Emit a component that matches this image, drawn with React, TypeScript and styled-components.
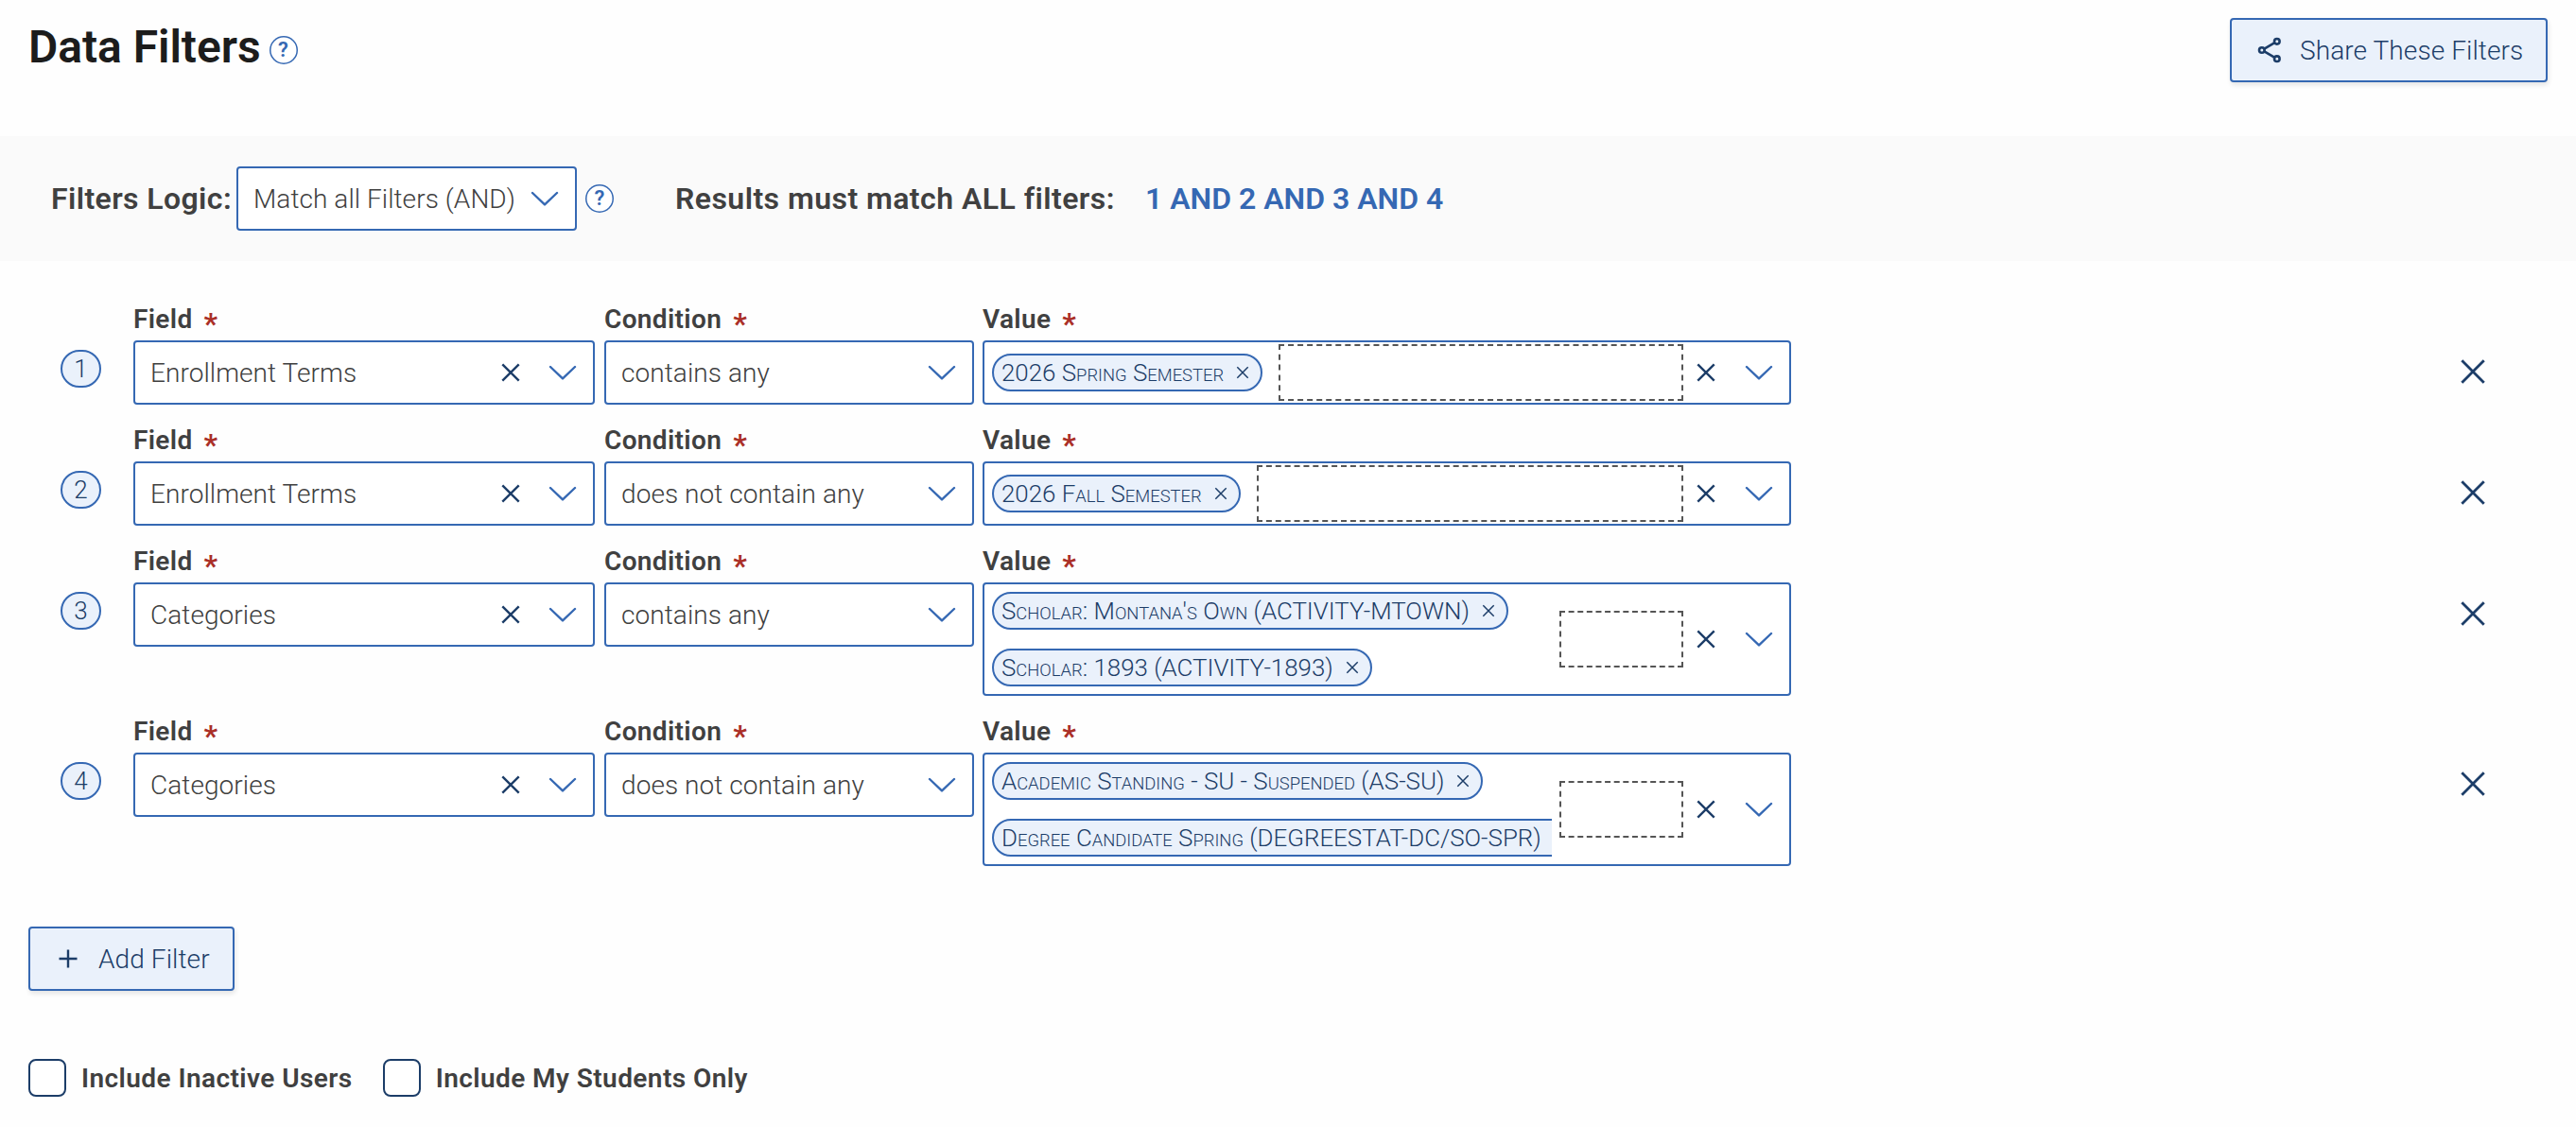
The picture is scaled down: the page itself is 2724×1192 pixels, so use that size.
import { createGlobalStyle, styled } from "styled-components";

const GlobalStyle = createGlobalStyle`
  * {
    box-sizing: border-box;
  }
  body {
    margin: 0;
    background-color: #fefefe;
    color: #404040;
    font-family: Roboto, "Liberation Sans", sans-serif;
    font-size: 28px;
    font-weight: 300;
  }
  svg {
    display: block;
    flex-shrink: 0;
  }
`;

const Header = styled.header`
  display: flex;
  justify-content: space-between;
  align-items: flex-start;
  height: 144px;
  padding: 19px 30px 0;
`;
const TitleGroup = styled.div`
  display: flex;
  align-items: center;
  gap: 9px;
  height: 60px;
  padding-top: 8px;
`;
const Title = styled.h1`
  margin: 0 0 6px;
  font-size: 48px;
  font-weight: 600;
  line-height: 56px;
  letter-spacing: -0.05px;
  color: #1c1c1c;
`;
const Help = styled.span`
  display: flex;
  align-items: center;
  justify-content: center;
  width: 30px;
  height: 30px;
  border-radius: 50%;
  background-color: #ffffff;
  box-shadow: inset 0 0 0 1.5px #3568b3;
  color: #3568b3;
  font-size: 22px;
  font-weight: 600;
  line-height: 1;
`;
const Button = styled.button<{ $width: number; $gap: number; $indent: number }>`
  display: flex;
  align-items: center;
  gap: ${(props) => props.$gap}px;
  width: ${(props) => props.$width}px;
  height: 68px;
  padding: 0 0 0 ${(props) => props.$indent}px;
  border: 2px solid #3568b3;
  border-radius: 4px;
  background-color: #eaf1fb;
  box-shadow: 1px 3px 5px rgba(0, 0, 0, 0.1);
  color: #1c3d68;
  font-family: inherit;
  font-size: 28px;
  font-weight: 300;
  letter-spacing: 0.1px;
  white-space: nowrap;
`;

const LogicBar = styled.section`
  display: flex;
  align-items: center;
  height: 132px;
  padding-left: 54px;
  background-color: #fafafa;
  font-size: 32px;
  font-weight: 600;
`;
const LogicLabel = styled.span`
  width: 196px;
  letter-spacing: 0.4px;
  white-space: nowrap;
`;
const LogicHelp = styled.div`
  margin: 0 65px 0 9px;
`;
const LogicSummary = styled.span`
  letter-spacing: 0.45px;
`;
const Expression = styled.span`
  margin-left: 32px;
  color: #3568b3;
`;

const Rows = styled.main`
  display: flex;
  flex-direction: column;
  gap: 10px;
  padding-top: 34px;
`;
const Row = styled.div`
  display: flex;
  align-items: flex-start;
  padding: 0 96px 0 64px;
`;
const Badge = styled.span`
  display: flex;
  align-items: center;
  justify-content: center;
  width: 43px;
  height: 40px;
  margin: 60px 34px 0 0;
  border: 2px solid #3568b3;
  border-radius: 20px;
  background-color: #eaf1fb;
  color: #1c3d68;
  font-size: 26px;
`;
const Column = styled.div<{ $width: number }>`
  width: ${(props) => props.$width}px;
`;
const Columns = styled.div`
  display: grid;
  grid-template-columns: 498px 400px 855px;
`;
const Label = styled.div`
  display: flex;
  height: 50px;
  padding-top: 11px;
  font-size: 28px;
  font-weight: 600;
  letter-spacing: 0.35px;
  line-height: 34px;
`;
const Required = styled.span`
  margin: 4px 0 0 12px;
  color: #aa2f27;
  font-size: 32px;
  font-weight: 700;
`;
const Select = styled.div<{ $width?: number }>`
  display: flex;
  align-items: center;
  width: ${(props) => (props.$width ? `${props.$width}px` : "100%")};
  height: 68px;
  padding: 0 17px 0 16px;
  border: 2px solid #3568b3;
  border-radius: 4px;
  background-color: #ffffff;
  font-size: 28px;
  font-weight: 300;
`;
const SelectText = styled.span`
  flex: 1;
  letter-spacing: 0.07px;
  white-space: nowrap;
`;
const Actions = styled.div<{ $gap: number }>`
  display: flex;
  align-items: center;
  gap: ${(props) => props.$gap}px;
`;
const MultiSelect = styled(Select)`
  height: auto;
  min-height: 68px;
  padding: 0 17px 0 8px;
`;
const Tags = styled.div<{ $wrap: boolean }>`
  display: flex;
  flex-direction: column;
  align-items: flex-start;
  gap: 20px;
  width: ${(props) => (props.$wrap ? "592px" : "auto")};
  margin-right: ${(props) => (props.$wrap ? 8 : 17)}px;
  padding: ${(props) => (props.$wrap ? "8px 0" : "0")};
  overflow: hidden;
`;
const Tag = styled.span`
  display: flex;
  align-items: center;
  flex-shrink: 0;
  gap: 13px;
  height: 40px;
  padding: 0 12px 0 8px;
  border: 2px solid #3568b3;
  border-radius: 20px;
  background-color: #eaf1fb;
  color: #1c3d68;
  font-size: 25.9px;
  white-space: nowrap;
`;
const SmallCaps = styled.span`
  font-size: 0.71em;
  text-transform: uppercase;
`;
const TagInput = styled.div`
  flex: 1;
  height: 60px;
  margin-right: 14px;
  border: 2px dashed #555555;
`;
const RemoveRow = styled.div`
  margin: 70px 0 0 auto;
`;

const Footer = styled.footer`
  padding: 64px 30px 0;
`;
const Options = styled.div`
  display: flex;
  gap: 32px;
  margin-top: 72px;
`;
const Option = styled.label`
  display: flex;
  align-items: center;
  gap: 16px;
  height: 40px;
  font-size: 28px;
  font-weight: 600;
  letter-spacing: 0.43px;
  line-height: 34px;
`;
const OptionText = styled.span`
  padding-top: 2px;
`;
const Checkbox = styled.span`
  width: 40px;
  height: 40px;
  border: 2px solid #1c3d68;
  border-radius: 8px;
  background-color: #ffffff;
`;

const Cross = ({ size, stroke = 2.4 }: { size: number; stroke?: number }) => (
  <svg width={size} height={size} viewBox={`0 0 ${size} ${size}`}>
    <path
      d={`M1.3 1.3L${size - 1.3} ${size - 1.3}M${size - 1.3} 1.3L1.3 ${size - 1.3}`}
      stroke="#1c3d68"
      strokeWidth={stroke}
    />
  </svg>
);
const Chevron = () => (
  <svg width="30" height="16" viewBox="0 0 30 16" fill="none">
    <path
      d="M2 2L15 14.4L28 2"
      stroke="#3568b3"
      strokeWidth="2.4"
      strokeLinecap="round"
      strokeLinejoin="round"
    />
  </svg>
);
const ShareIcon = () => (
  <svg width="26" height="28" viewBox="0 0 26 28" fill="none">
    <g stroke="#1c3d68" strokeWidth="2.6">
      <path d="M7.4 12.6L18 6.4M7.4 15.4L18 21.6" />
      <circle cx="4.8" cy="14" r="2.8" />
      <circle cx="20.8" cy="4.8" r="2.8" />
      <circle cx="20.8" cy="23.2" r="2.8" />
    </g>
  </svg>
);
const PlusIcon = () => (
  <svg width="20" height="20" viewBox="0 0 20 20">
    <path d="M10 0.5V19.5M0.5 10H19.5" stroke="#1c3d68" strokeWidth="2.4" />
  </svg>
);

interface IFilter {
  field: string;
  condition: string;
  values: string[];
}

const filters: IFilter[] = [
  {
    field: "Enrollment Terms",
    condition: "contains any",
    values: ["2026 Spring Semester"],
  },
  {
    field: "Enrollment Terms",
    condition: "does not contain any",
    values: ["2026 Fall Semester"],
  },
  {
    field: "Categories",
    condition: "contains any",
    values: ["Scholar: Montana's Own (ACTIVITY-MTOWN)", "Scholar: 1893 (ACTIVITY-1893)"],
  },
  {
    field: "Categories",
    condition: "does not contain any",
    values: [
      "Academic Standing - SU - Suspended (AS-SU)",
      "Degree Candidate Spring (DEGREESTAT-DC/SO-SPR)",
    ],
  },
];

const RequiredLabel = ({ text }: { text: string }) => (
  <Label>
    {text}
    <Required>*</Required>
  </Label>
);

// lowercase runs are set as scaled capitals
const TagText = ({ text }: { text: string }) => (
  <span>
    {text
      .split(/([a-z]+)/)
      .map((part, i) => (i % 2 ? <SmallCaps key={i}>{part}</SmallCaps> : part))}
  </span>
);

const FilterRow = ({ filter, index }: { filter: IFilter; index: number }) => (
  <Row>
    <Badge>{index + 1}</Badge>
    <Columns>
      <Column $width={488}>
        <RequiredLabel text="Field" />
        <Select>
          <SelectText>{filter.field}</SelectText>
          <Actions $gap={30}>
            <Cross size={20} />
            <Chevron />
          </Actions>
        </Select>
      </Column>
      <Column $width={391}>
        <RequiredLabel text="Condition" />
        <Select>
          <SelectText>{filter.condition}</SelectText>
          <Chevron />
        </Select>
      </Column>
      <Column $width={855}>
        <RequiredLabel text="Value" />
        <MultiSelect>
          <Tags $wrap={filter.values.length > 1}>
            {filter.values.map((value) => (
              <Tag key={value}>
                <TagText text={value} />
                <Cross size={14} stroke={1.5} />
              </Tag>
            ))}
          </Tags>
          <TagInput />
          <Actions $gap={31}>
            <Cross size={20} />
            <Chevron />
          </Actions>
        </MultiSelect>
      </Column>
    </Columns>
    <RemoveRow>
      <Cross size={26} stroke={2.8} />
    </RemoveRow>
  </Row>
);

const App = () => {
  return (
    <>
      <GlobalStyle />
      <Header>
        <TitleGroup>
          <Title>Data Filters</Title>
          <Help>?</Help>
        </TitleGroup>
        <Button $width={336} $gap={19} $indent={27}>
          <ShareIcon />
          Share These Filters
        </Button>
      </Header>
      <LogicBar>
        <LogicLabel>Filters Logic:</LogicLabel>
        <Select $width={360}>
          <SelectText>Match all Filters (AND)</SelectText>
          <Chevron />
        </Select>
        <LogicHelp>
          <Help>?</Help>
        </LogicHelp>
        <LogicSummary>Results must match ALL filters:</LogicSummary>
        <Expression>1 AND 2 AND 3 AND 4</Expression>
      </LogicBar>
      <Rows>
        {filters.map((filter, index) => (
          <FilterRow key={index} filter={filter} index={index} />
        ))}
      </Rows>
      <Footer>
        <Button $width={218} $gap={22} $indent={30}>
          <PlusIcon />
          Add Filter
        </Button>
        <Options>
          <Option>
            <Checkbox />
            <OptionText>Include Inactive Users</OptionText>
          </Option>
          <Option>
            <Checkbox />
            <OptionText>Include My Students Only</OptionText>
          </Option>
        </Options>
      </Footer>
    </>
  );
};

export default App;
